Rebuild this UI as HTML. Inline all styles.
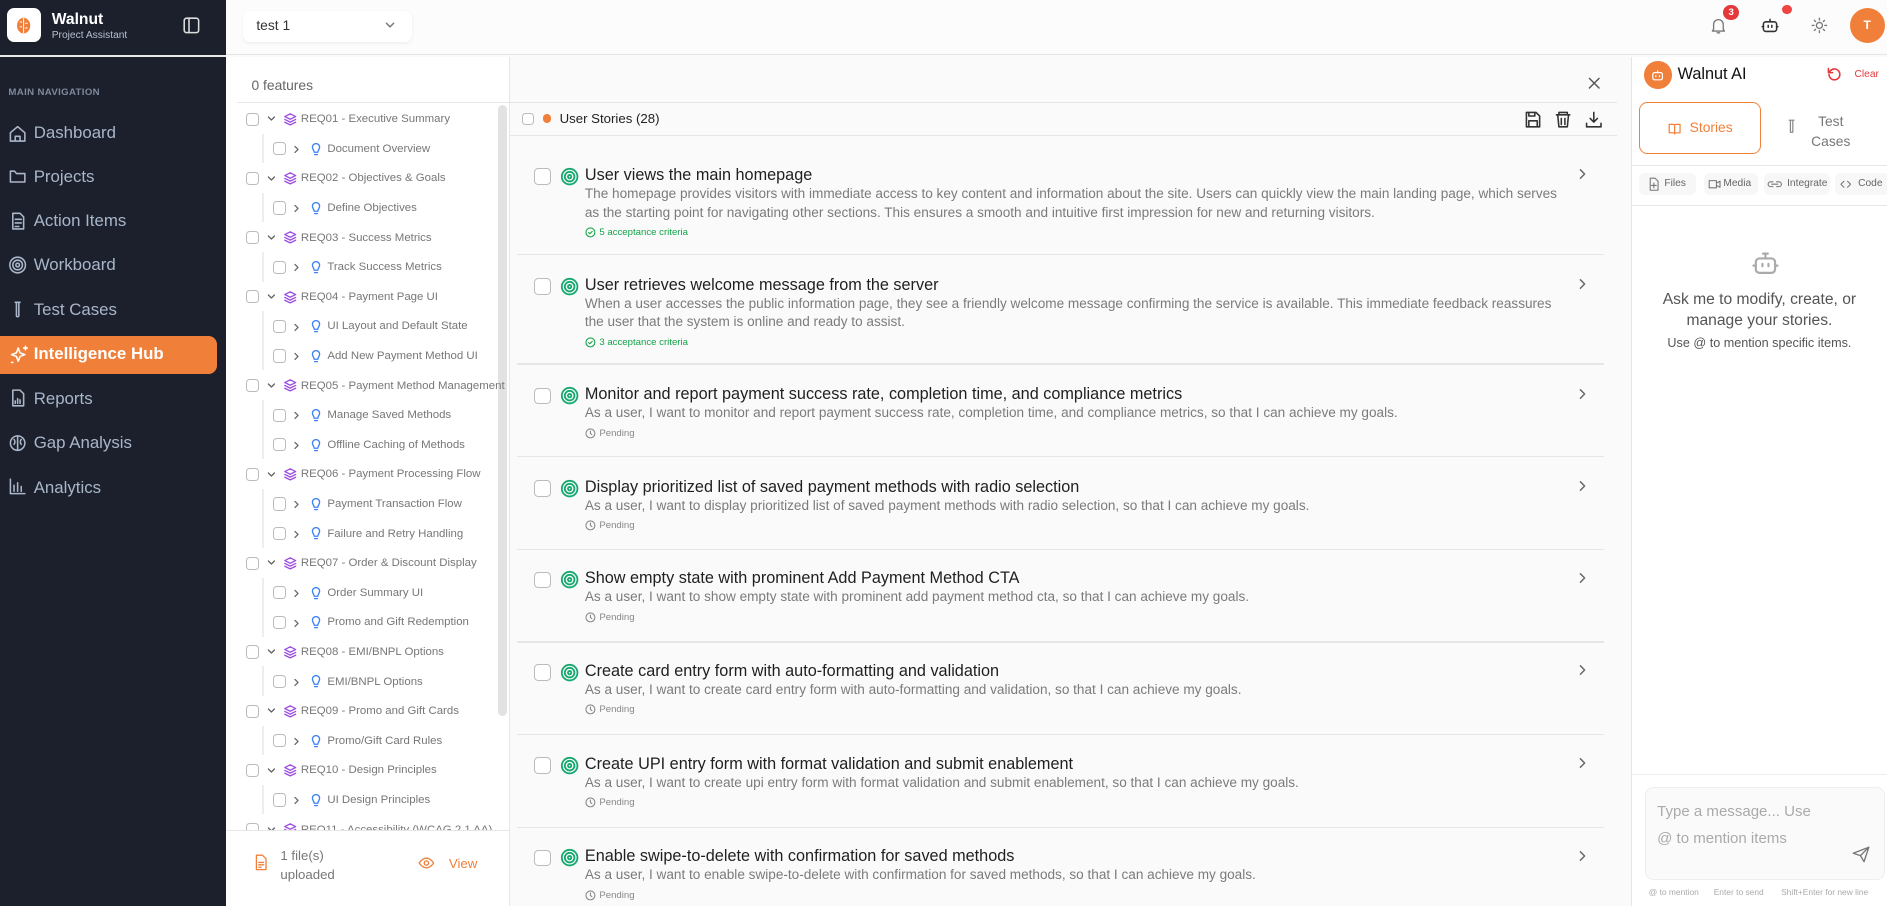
<!DOCTYPE html>
<html><head><meta charset="utf-8">
<style>
*{box-sizing:border-box;margin:0;padding:0}
html,body{width:1887px;height:906px;overflow:hidden;background:#fafafa}
#w{zoom:1.20344;width:1568px;height:753px;position:relative;font-family:"Liberation Sans",sans-serif;overflow:hidden}
.a{position:absolute;white-space:nowrap}
svg{position:absolute;fill:none;stroke-linecap:round;stroke-linejoin:round}
.sb{left:0;top:0;width:188px;height:753px;background:#1b202c}
.nav{left:28px;font-size:14px;color:#a9b6c9}
.cb{position:absolute;width:11px;height:11px;border:1px solid #bbb;border-radius:3px;background:#fff}
.tt{font-size:9.5px;color:#777}
.st{font-size:13.5px;color:#1f1f1f}
.sd{font-size:11.3px;color:#7b7b7b;line-height:15.4px;white-space:normal;width:815px}
.meta{font-size:8px;color:#888}
.hl{position:absolute;height:1px;background:#e6e6e6}
</style></head><body><div id="w">

<!-- sidebar -->
<div class="a sb"></div>
<div class="a" style="left:6px;top:7px;width:28px;height:28px;background:#fff;border-radius:6px"></div>
<svg style="left:12px;top:13px" width="16" height="16" viewBox="0 0 16 16"><ellipse cx="8" cy="8" rx="5.5" ry="6.5" fill="#f07f3a"/><path d="M8 2v12M5 5h1.5M9.5 6h1.5M5 9h1.5M9.5 10h1.5" stroke="#fff" stroke-width="0.8"/></svg>
<div class="a" style="left:43px;top:9px;font-size:13px;font-weight:bold;color:#fff">Walnut</div>
<div class="a" style="left:43px;top:25px;font-size:8.5px;color:#b5c0d0">Project Assistant</div>
<svg style="left:152px;top:14px" width="14" height="14" viewBox="0 0 14 14"><rect x="1" y="1" width="12" height="12" rx="2" stroke="#ddd" stroke-width="1.3"/><path d="M5 1v12" stroke="#ddd" stroke-width="1.3"/></svg>
<div class="a" style="left:0;top:46px;width:188px;height:1px;background:#e8e8e8"></div>
<div class="a" style="left:7px;top:72px;font-size:8px;font-weight:bold;color:#7f8a9c;letter-spacing:.3px">MAIN NAVIGATION</div>

<div class="a nav" style="top:102px">Dashboard</div>
<div class="a nav" style="top:139px">Projects</div>
<div class="a nav" style="top:175px">Action Items</div>
<div class="a nav" style="top:212px">Workboard</div>
<div class="a nav" style="top:249px">Test Cases</div>
<div class="a" style="left:0;top:279px;width:180px;height:32px;background:#f07f3a;border-radius:0 7px 7px 0"></div>
<div class="a nav" style="top:286px;color:#fff;font-weight:bold">Intelligence Hub</div>
<div class="a nav" style="top:323px">Reports</div>
<div class="a nav" style="top:360px">Gap Analysis</div>
<div class="a nav" style="top:397px">Analytics</div>
<svg style="left:7px;top:102px" width="16" height="310" viewBox="0 0 16 310" stroke="#aab6c9" stroke-width="1.3">
<path d="M2 15V8l6-5 6 5v7zM6 15v-4h4v4"/>
<path d="M2 40v9h12v-7H7l-1.5-2z"/>
<path d="M4 75h6l3 3v10H4zM6 80h5M6 83h5M6 86h3"/>
<circle cx="8" cy="118" r="6.5"/><circle cx="8" cy="118" r="4"/><circle cx="8" cy="118" r="1.5"/>
<path d="M6 149h4M7 149v11a1 1 0 002 0v-11"/>
<path d="M7 191l1.5-4 1.5 4 4 1.5-4 1.5-1.5 4-1.5-4-4-1.5z" stroke="#fff"/><path d="M13 187h3M14.5 185.5v3M3 199h1" stroke="#fff"/>
<path d="M4 222h6l3 3v10H4zM6 233v-2M8 233v-4M10 233v-3"/>
<circle cx="8" cy="266" r="6"/><path d="M8 260v12M5 263c1 1 1 3 0 4M11 263c-1 1-1 3 0 4"/>
<path d="M2 296v12h12M5 306v-5M8 306v-7M11 306v-4"/>
</svg>

<!-- top bar -->
<div class="a" style="left:188px;top:0;width:1380px;height:46px;background:#fcfcfc;border-bottom:1px solid #e6e6e6"></div>
<div class="a" style="left:202px;top:9px;width:140px;height:26px;background:#fff;border-radius:6px;box-shadow:0 1px 3px rgba(0,0,0,.06)"></div>
<div class="a" style="left:213px;top:14px;font-size:11.5px;color:#333">test 1</div>
<svg style="left:319px;top:16px" width="10" height="10" viewBox="0 0 10 10"><path d="M2 3.5l3 3 3-3" stroke="#777" stroke-width="1.2"/></svg>
<svg style="left:1421px;top:13px" width="14" height="16" viewBox="0 0 14 16" stroke="#777" stroke-width="1.1"><path d="M3 11V7a4 4 0 018 0v4l1 1.5H2zM6 14h2"/></svg>
<div class="a" style="left:1432px;top:4px;width:13px;height:13px;border-radius:50%;background:#e5383b;color:#fff;font-size:8px;font-weight:bold;text-align:center;line-height:13px">3</div>
<svg style="left:1463px;top:14px" width="15" height="14" viewBox="0 0 15 14" stroke="#333" stroke-width="1.3"><rect x="2" y="4" width="11" height="8" rx="2"/><path d="M7.5 4V2M1 8h1M13 8h1M6 7v1.5M9 7v1.5"/></svg>
<div class="a" style="left:1481px;top:4px;width:8px;height:8px;border-radius:50%;background:#ef4444"></div>
<svg style="left:1505px;top:14px" width="14" height="14" viewBox="0 0 14 14" stroke="#777" stroke-width="1.1"><circle cx="7" cy="7" r="2.5"/><path d="M7 1v1.5M7 11.5V13M1 7h1.5M11.5 7H13M2.8 2.8l1 1M10.2 10.2l1 1M2.8 11.2l1-1M10.2 3.8l1-1"/></svg>
<div class="a" style="left:1537px;top:7px;width:29px;height:29px;border-radius:50%;background:#f07f3a;color:#fff;font-size:10px;font-weight:bold;text-align:center;line-height:29px">T</div>

<!-- tree panel -->
<div class="a" style="left:188px;top:47px;width:235px;height:706px;background:#fff"></div>
<div class="a" style="left:209px;top:64px;font-size:11.5px;color:#666">0 features</div>
<div class="hl" style="left:197px;top:85px;width:226px"></div>
<div class="a" style="left:414px;top:87px;width:7px;height:508px;background:#e2e2e2;border-radius:4px"></div>
<div id="tree"></div>
<div class="a" style="left:188px;top:690px;width:235px;height:63px;background:#fff;border-top:1px solid #e6e6e6"></div>
<svg style="left:211px;top:710px" width="12" height="14" viewBox="0 0 12 14" stroke="#f07f3a" stroke-width="1.1"><path d="M2 1h5l3 3v9H2zM4 7h4M4 9h4M4 11h2"/></svg>
<div class="a" style="left:233px;top:704px;font-size:11px;color:#777;line-height:15.5px">1 file(s)<br>uploaded</div>
<svg style="left:347px;top:712px" width="14" height="10" viewBox="0 0 14 10" stroke="#f07f3a" stroke-width="1.1"><path d="M1 5s2.5-4 6-4 6 4 6 4-2.5 4-6 4-6-4-6-4z"/><circle cx="7" cy="5" r="1.8"/></svg>
<div class="a" style="left:373px;top:711px;font-size:11px;color:#f07f3a">View</div>
<div class="a" style="left:423px;top:47px;width:1px;height:706px;background:#e6e6e6"></div>

<!-- story panel -->
<svg style="left:1319px;top:63px" width="12" height="12" viewBox="0 0 12 12" stroke="#555" stroke-width="1.2"><path d="M2 2l8 8M10 2l-8 8"/></svg>
<div class="hl" style="left:424px;top:85px;width:920px"></div>
<div class="cb" style="left:434px;top:94px;width:10px;height:10px"></div>
<div class="a" style="left:451px;top:95px;width:7px;height:7px;border-radius:50%;background:#f07f3a"></div>
<div class="a" style="left:465px;top:92px;font-size:11px;color:#222">User Stories (28)</div>
<svg style="left:1266px;top:91px" width="70" height="16" viewBox="0 0 70 16" stroke="#333" stroke-width="1.3"><path d="M2 2h8l3 3v9H2zM4 2v3h5V2M4 14V9h7v5"/><path d="M27 4h11M29 4V2h7v2M28 4l1 10h7l1-10M31 7v5M34 7v5"/><path d="M58 2v8M55 7l3 3 3-3M52 11v3h12v-3"/></svg>
<div class="hl" style="left:424px;top:112px;width:920px"></div>
<div id="stories"></div>

<!-- right panel -->
<div class="a" style="left:1355px;top:47px;width:213px;height:706px;background:#fff;border-left:1px solid #e6e6e6"></div>
<div class="a" style="left:1366px;top:51px;width:23px;height:23px;border-radius:50%;background:#f07f3a"></div>
<svg style="left:1372px;top:57px" width="11" height="11" viewBox="0 0 11 11" stroke="#fff" stroke-width="1"><rect x="1.5" y="3" width="8" height="6" rx="1.5"/><path d="M5.5 3V1.5M4 5.5v1M7 5.5v1"/></svg>
<div class="a" style="left:1394px;top:54px;font-size:13.5px;color:#111">Walnut AI</div>
<svg style="left:1517px;top:55px" width="14" height="14" viewBox="0 0 14 14" stroke="#e5383b" stroke-width="1.3"><path d="M2.5 7a4.5 4.5 0 101.3-3.2L2 5.5M2 2v3.5h3.5"/></svg>
<div class="a" style="left:1541px;top:57px;font-size:8.5px;color:#e5383b">Clear</div>
<div class="a" style="left:1362px;top:85px;width:101px;height:43px;border:1.2px solid #f07f3a;border-radius:7px"></div>
<svg style="left:1386px;top:101px" width="11" height="11" viewBox="0 0 11 11" stroke="#f07f3a" stroke-width="1"><path d="M1 2h3.5a1 1 0 011 1v7a1 1 0 00-1-1H1zM10 2H6.5a1 1 0 00-1 1v7a1 1 0 011-1H10z"/></svg>
<div class="a" style="left:1404px;top:99px;font-size:11.5px;color:#f07f3a">Stories</div>
<svg style="left:1486px;top:99px" width="6" height="13" viewBox="0 0 6 13" stroke="#888" stroke-width="1"><path d="M1 1h4M2 1v10h2V1"/></svg>
<div class="a" style="left:1505px;top:92px;font-size:11.5px;color:#777;text-align:center;line-height:17px">Test<br>Cases</div>
<div class="hl" style="left:1356px;top:137px;width:212px"></div>
<div class="a" style="left:1362px;top:144px;width:47px;height:18px;background:#f7f7f7;border-radius:5px"></div>
<div class="a" style="left:1416px;top:144px;width:45px;height:18px;background:#f7f7f7;border-radius:5px"></div>
<div class="a" style="left:1466px;top:144px;width:55px;height:18px;background:#f7f7f7;border-radius:5px"></div>
<div class="a" style="left:1525px;top:144px;width:45px;height:18px;background:#f7f7f7;border-radius:5px"></div>
<svg style="left:1370px;top:147px" width="200" height="12" viewBox="0 0 200 12" stroke="#777" stroke-width="0.9"><path d="M1 1h4l2.5 2.5V11H1zM4 5v4M2 7h4"/><path d="M50 3h6v6h-6zM56 5l3-1.5v5L56 7"/><path d="M103 4h-2a2 2 0 000 4h2M106 4h2a2 2 0 010 4h-2M102 6h5"/><path d="M162 3.5L159.5 6l2.5 2.5M165 3.5l2.5 2.5L165 8.5"/></svg>
<div class="a" style="left:1383px;top:148px;font-size:8.5px;color:#666">Files</div>
<div class="a" style="left:1432px;top:148px;font-size:8.5px;color:#666">Media</div>
<div class="a" style="left:1485px;top:148px;font-size:8.5px;color:#666">Integrate</div>
<div class="a" style="left:1544px;top:148px;font-size:8.5px;color:#666">Code</div>
<div class="hl" style="left:1356px;top:170px;width:212px"></div>
<svg style="left:1455px;top:208px" width="24" height="24" viewBox="0 0 24 24" stroke="#aaa" stroke-width="1.8"><rect x="4" y="7" width="16" height="12" rx="3"/><path d="M12 7V3M10 3h4M2 13h2M20 13h2M9.5 11.5v2M14.5 11.5v2"/></svg>
<div class="a" style="left:1356px;top:240px;width:212px;text-align:center;font-size:13px;color:#555;line-height:18px;white-space:normal">Ask me to modify, create, or<br>manage your stories.</div>
<div class="a" style="left:1356px;top:279px;width:212px;text-align:center;font-size:10.5px;color:#555">Use @ to mention specific items.</div>
<div class="hl" style="left:1356px;top:643px;width:212px;background:#eee"></div>
<div class="a" style="left:1367px;top:654px;width:199px;height:77px;background:#fafafa;border:1px solid #eee;border-radius:7px"></div>
<div class="a" style="left:1377px;top:664px;font-size:12.5px;color:#aaa;line-height:22px">Type a message... Use<br>@ to mention items</div>
<svg style="left:1539px;top:703px" width="16" height="14" viewBox="0 0 16 14" stroke="#777" stroke-width="1.1"><path d="M1 6l13-5-4 12-3-5zM7 8l7-7"/></svg>
<div class="a" style="left:1370px;top:737px;font-size:7px;color:#aaa">@ to mention</div>
<div class="a" style="left:1424px;top:737px;font-size:7px;color:#aaa">Enter to send</div>
<div class="a" style="left:1480px;top:737px;font-size:7px;color:#aaa">Shift+Enter for new line</div>
</div>

<script>
var tree=[["REQ01 - Executive Summary",["Document Overview"]],["REQ02 - Objectives & Goals",["Define Objectives"]],["REQ03 - Success Metrics",["Track Success Metrics"]],["REQ04 - Payment Page UI",["UI Layout and Default State","Add New Payment Method UI"]],["REQ05 - Payment Method Management",["Manage Saved Methods","Offline Caching of Methods"]],["REQ06 - Payment Processing Flow",["Payment Transaction Flow","Failure and Retry Handling"]],["REQ07 - Order & Discount Display",["Order Summary UI","Promo and Gift Redemption"]],["REQ08 - EMI/BNPL Options",["EMI/BNPL Options"]],["REQ09 - Promo and Gift Cards",["Promo/Gift Card Rules"]],["REQ10 - Design Principles",["UI Design Principles"]],["REQ11 - Accessibility (WCAG 2.1 AA)",[]]];
var h='',y=99;
tree.forEach(function(p){
 h+='<div class="cb" style="left:204px;top:'+(y-5.5)+'px"></div><svg style="left:221px;top:'+(y-4)+'px" width="9" height="8" viewBox="0 0 9 8" stroke="#666" stroke-width="1.1"><path d="M2 2.5l2.5 2.5 2.5-2.5"/></svg><svg style="left:235px;top:'+(y-6)+'px" width="12" height="12" viewBox="0 0 12 12" stroke="#9b4de0" stroke-width="1.1"><path d="M6 1.5l4.5 2.3L6 6 1.5 3.8zM1.5 6.2L6 8.4l4.5-2.2M1.5 8.5L6 10.7l4.5-2.2"/></svg><div class="a tt" style="left:250px;top:'+(y-5)+'px">'+p[0]+'</div>';
 var ys=y;y+=24.6;
 p[1].forEach(function(c){
  h+='<div class="cb" style="left:227px;top:'+(y-5.5)+'px"></div><svg style="left:243px;top:'+(y-4)+'px" width="8" height="9" viewBox="0 0 8 9" stroke="#666" stroke-width="1.1"><path d="M2.5 2l2.5 2.5-2.5 2.5"/></svg><svg style="left:258px;top:'+(y-6)+'px" width="10" height="12" viewBox="0 0 10 12" stroke="#3b82f6" stroke-width="1.1"><path d="M3.5 8.5C3.5 7 2 6 2 4.3a3 3 0 016 0C8 6 6.5 7 6.5 8.5zM3.8 10.5h2.4"/></svg><div class="a tt" style="left:272px;top:'+(y-5)+'px">'+c+'</div>';
  y+=24.6;
 });
 if(p[1].length)h+='<div class="a" style="left:218px;top:'+(ys+12)+'px;width:1px;height:'+(p[1].length*24.6)+'px;background:#eee"></div>';
});
document.getElementById('tree').innerHTML=h;

var S=[["User views the main homepage","The homepage provides visitors with immediate access to key content and information about the site. Users can quickly view the main landing page, which serves as the starting point for navigating other sections. This ensures a smooth and intuitive first impression for new and returning visitors.","5 acceptance criteria",146],
["User retrieves welcome message from the server","When a user accesses the public information page, they see a friendly welcome message confirming the service is available. This immediate feedback reassures the user that the system is online and ready to assist.","3 acceptance criteria",237],
["Monitor and report payment success rate, completion time, and compliance metrics","As a user, I want to monitor and report payment success rate, completion time, and compliance metrics, so that I can achieve my goals.","",328],
["Display prioritized list of saved payment methods with radio selection","As a user, I want to display prioritized list of saved payment methods with radio selection, so that I can achieve my goals.","",405],
["Show empty state with prominent Add Payment Method CTA","As a user, I want to show empty state with prominent add payment method cta, so that I can achieve my goals.","",481],
["Create card entry form with auto-formatting and validation","As a user, I want to create card entry form with auto-formatting and validation, so that I can achieve my goals.","",558],
["Create UPI entry form with format validation and submit enablement","As a user, I want to create upi entry form with format validation and submit enablement, so that I can achieve my goals.","",635],
["Enable swipe-to-delete with confirmation for saved methods","As a user, I want to enable swipe-to-delete with confirmation for saved methods, so that I can achieve my goals.","",712]];
var g='';
S.forEach(function(s,i){
 var y=s[3];
 g+='<div class="cb" style="left:444px;top:'+(y-6)+'px;width:14px;height:14px;border-radius:3.5px"></div>';
 g+='<svg style="left:465px;top:'+(y-7)+'px" width="16" height="16" viewBox="0 0 16 16" stroke="#16a870" stroke-width="1.5"><circle cx="8" cy="8" r="6.5"/><circle cx="8" cy="8" r="4"/><circle cx="8" cy="8" r="1.4"/></svg>';
 g+='<div class="a st" style="left:486px;top:'+(y-8)+'px">'+s[0]+'</div>';
 g+='<div class="a sd" style="left:486px;top:'+(y+8)+'px">'+s[1]+'</div>';
 var lines=(i<2)?2:1;
 var my=y+8+lines*15.4+4;
 if(s[2]) g+='<svg style="left:486px;top:'+(my)+'px" width="9" height="9" viewBox="0 0 9 9" stroke="#16a34a" stroke-width="0.9"><circle cx="4.5" cy="4.5" r="3.7"/><path d="M3 4.6l1 1 2-2"/></svg><div class="a meta" style="left:498px;top:'+(my)+'px;color:#16a34a">'+s[2]+'</div>';
 else g+='<svg style="left:486px;top:'+(my)+'px" width="9" height="9" viewBox="0 0 9 9" stroke="#888" stroke-width="0.9"><circle cx="4.5" cy="4.5" r="3.7"/><path d="M4.5 2.5v2l1.2 1"/></svg><div class="a meta" style="left:498px;top:'+(my)+'px">Pending</div>';
 g+='<svg style="left:1311px;top:'+(y-6)+'px" width="8" height="10" viewBox="0 0 8 10" stroke="#666" stroke-width="1.2"><path d="M2 1.5l3.5 3.5L2 8.5"/></svg>';
 if(i<7){var ly=[211,302,379,456,533,610,687][i];g+='<div class="hl" style="left:430px;top:'+ly+'px;width:903px"></div>';}
});
document.getElementById('stories').innerHTML=g;
</script>
</body></html>
